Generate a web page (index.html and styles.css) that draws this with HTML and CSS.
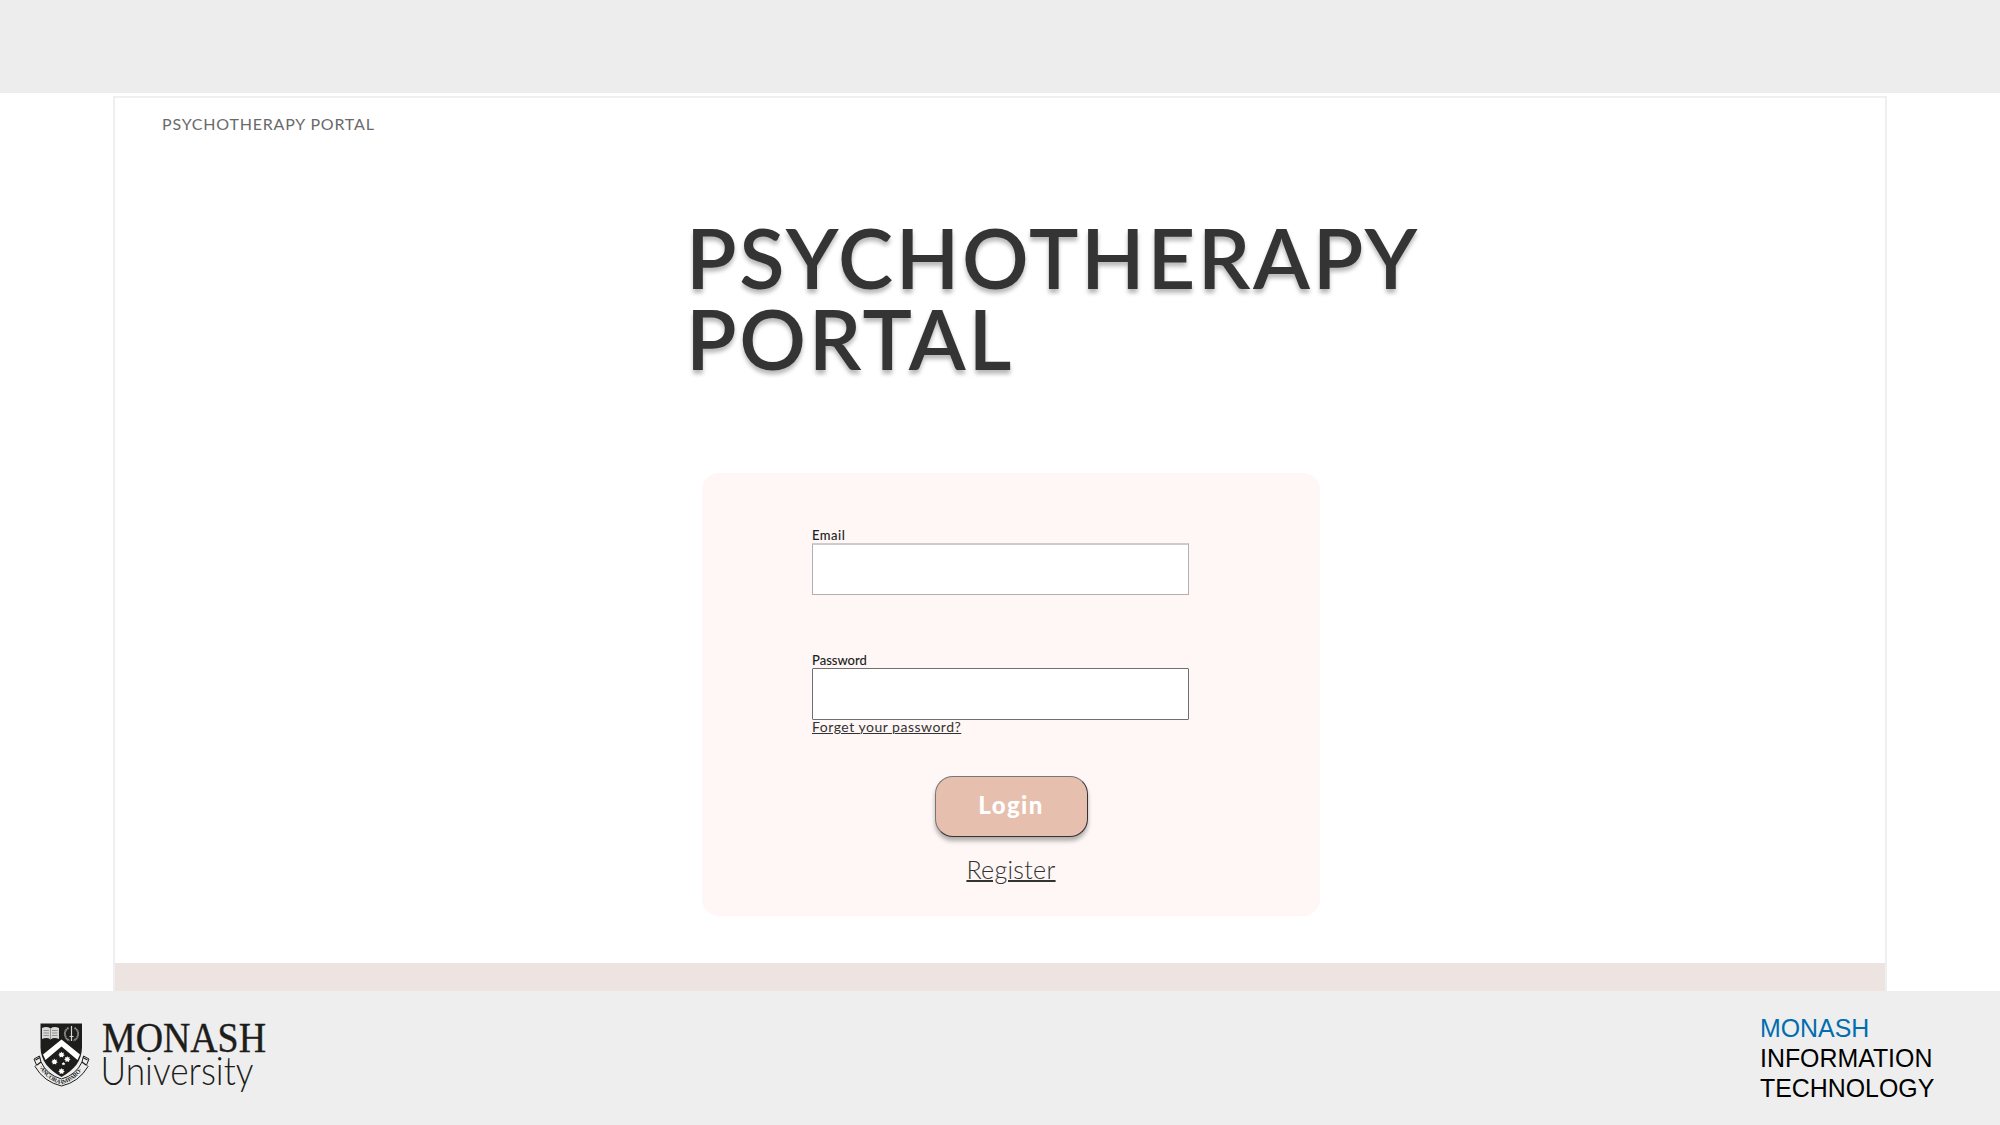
FILE: index.html
```html
<!DOCTYPE html>
<html lang="en">
<head>
<meta charset="utf-8">
<title>Psychotherapy Portal</title>
<link rel="stylesheet" href="styles.css">
</head>
<body>
<div class="slide">
  <header class="top-band"></header>
  <main class="stage">
    <section class="portal">
      <nav class="portal-nav">PSYCHOTHERAPY PORTAL</nav>
      <h1 class="title"><span class="title-long">PSYCHOTHERAPY</span><span class="title-short">PORTAL</span></h1>
      <form class="card">
        <div class="field field-email">
          <label class="label label-email" for="email">Email</label>
          <input class="input input-email" id="email" type="email">
        </div>
        <div class="field field-password">
          <label class="label" for="password">Password</label>
          <input class="input input-password" id="password" type="password">
          <a class="forgot">Forget your password?</a>
        </div>
        <button class="login" type="button">Login</button>
        <a class="register">Register</a>
      </form>
      <div class="portal-foot"></div>
    </section>
  </main>
  <footer class="bottom-band">
    <svg class="logo" width="240" height="80" viewBox="30 1016 240 80">
      <path d="M40.500 1023.500H82V1047C82 1061 74 1070 61.500 1077C49 1070 40.500 1061 40.500 1047Z" fill="#1d1d1b"/>
      <path d="M42 1028Q47 1026 50.500 1028.500Q54 1026 59 1028V1039Q54 1037 50.500 1039.500Q47 1037 42 1039Z" fill="#d8d8d8"/>
      <path d="M50.500 1028.500V1039M43.500 1030.500H49M52 1030.500H57.500M43.500 1033H49M52 1033H57.500M43.500 1035.500H49M52 1035.500H57.500" stroke="#777" stroke-width=".7" fill="none"/>
      <path d="M68.500 1028Q64.500 1030 65 1034.500Q65.500 1039 69.500 1040.500M74.500 1028Q78.500 1030 78 1034.500Q77.500 1039 73.500 1040.500" stroke="#999" stroke-width="2" stroke-dasharray="1.400 .5" fill="none"/>
      <path d="M71.500 1026V1041M69.500 1036.500H73.500" stroke="#d8d8d8" stroke-width="1.200"/>
      <path d="M43 1054.500L61.500 1039.500L80 1054.500L77.500 1060L61.500 1046.500L45.500 1060Z" fill="#fff"/>
      <path id="star" d="M61.300 1051.500l.9 1.500 1.700-.4-.5 1.600 1.400 1-1.600.7v1.600l-1.800-.8-1.700.8v-1.700l-1.400-.7 1.300-1-.4-1.600 1.600.4z" fill="#fff"/>
      <use href="#star" x="-7" y="7"/>
      <use href="#star" x="5.800" y="4.500"/>
      <use href="#star" y="16.500"/>
      <path d="M63.500 1062l.6 1.100h1.100l-.7 1 .3 1.200-1.300-.5-1.300.5.300-1.200-.8-1h1.200z" fill="#fff"/>
      <path d="M39.500 1056L34 1059L36.500 1065L35 1066.500Q44 1082 61.500 1086Q79 1082 88 1066.500L86.500 1065L89 1059L83.500 1056L82 1062Q76 1075 61.500 1079Q47 1075 41 1062Z" fill="#eee" stroke="#1d1d1b" stroke-width="1"/>
      <path d="M35.500 1060L40 1057.500M37 1065L41 1062M87.500 1060L83 1057.500M86 1065L82 1062" stroke="#1d1d1b" stroke-width="1.200"/>
      <path id="motto" d="M38.500 1066Q46 1080 61.500 1084.500Q77 1080 84.500 1066" fill="none"/>
      <text class="motto"><textPath href="#motto" textLength="55" startOffset="1">·ANCORA·IMPARO·</textPath></text>
      <text class="logo-serif" x="102" y="1051.500" textLength="164" lengthAdjust="spacingAndGlyphs">MONASH</text>
      <text class="logo-sans" x="100.500" y="1085" textLength="153" lengthAdjust="spacingAndGlyphs">University</text>
    </svg>
    <div class="faculty"><span class="faculty-name">MONASH</span><span>INFORMATION</span><span>TECHNOLOGY</span></div>
  </footer>
</div>
</body>
</html>
```
FILE: styles.css
```css
* { box-sizing: border-box; }
body { margin: 0; background: #fff; font-family: Lato, sans-serif; color: #333; }
.slide { width: 2000px; height: 1125px; display: flex; flex-direction: column; overflow: hidden; }
.top-band { height: 93px; background: #ededed; }
.stage { height: 898px; padding: 3px 113px 0; }
.portal { height: 895px; border: 2px solid #efefef; border-bottom: 0; display: flex; flex-direction: column; }
.portal-nav { height: 38px; padding: 16px 0 0 47px; font-size: 16px; line-height: 20px; letter-spacing: .8px; color: #6a6a6a; white-space: nowrap; }
.title { margin: 81px 0 0 571px; height: 162px; display: flex; flex-direction: column; font-size: 83px; line-height: 81px; font-weight: 600; color: #343434; text-shadow: 0 4px 4px rgba(0, 0, 0, .28); white-space: nowrap; }
.title-long { letter-spacing: 2.6px; }
.title-short { letter-spacing: 2.7px; }
.card { width: 618px; height: 443px; margin: 94px 0 0 587px; border-radius: 17px; background: #fef7f5; padding: 55px 0 0; display: flex; flex-direction: column; align-items: center; }
.field { width: 377px; margin-right: 21px; display: flex; flex-direction: column; align-items: flex-start; }
.field-email { height: 125px; }
.field-password { height: 100px; }
.label { height: 15px; font-size: 13px; line-height: 15px; font-weight: 500; color: #222; }
.label-email { letter-spacing: .5px; }
.input { width: 377px; height: 52px; background: #fff; border: 1px solid #b0b0b0; border-radius: 0; padding: 0 10px; outline: 0; }
.input-email { border-top: 2px solid #ccc; }
.input-password { border-color: #707070; border-radius: 1px; }
.forgot { margin-top: -1px; font-size: 14px; line-height: 16px; letter-spacing: .5px; color: #333; text-decoration: underline; text-underline-offset: 1px; text-decoration-thickness: 1px; white-space: nowrap; }
.login { width: 153px; height: 61px; margin: 23px 0 0; border: 1px solid; border-color: #777 #333 #333 #777; border-radius: 18px; background: #e6bfae; box-shadow: 0 4px 4px rgba(0, 0, 0, .3); font: 900 24px/30px Lato, sans-serif; letter-spacing: 1.4px; color: #fff; padding: 0 0 3px; }
.register { margin-top: 17px; font-size: 25px; line-height: 30px; font-weight: 300; letter-spacing: .3px; color: #333; text-decoration: underline; text-decoration-thickness: 2px; text-underline-offset: 1px; }
.portal-foot { height: 28px; margin-top: auto; background: #ede4e2; }
.bottom-band { height: 134px; background: #eee; display: flex; justify-content: space-between; padding: 25px 64px 0 30px; }
.logo { display: block; overflow: visible; }
.logo-serif { font: 41.500px "Liberation Serif", serif; fill: #1d1d1b; stroke: #1d1d1b; stroke-width: .4px; }
.logo-sans { font: 300 39px Lato, sans-serif; fill: #1d1d1b; }
.motto { font: bold 6px "Liberation Serif", serif; fill: #1d1d1b; }
.faculty { width: 176px; margin-top: -3px; display: flex; flex-direction: column; font: 24.900px/30px "Liberation Sans", sans-serif; color: #000; white-space: nowrap; }
.faculty-name { color: #006dae; }
```
